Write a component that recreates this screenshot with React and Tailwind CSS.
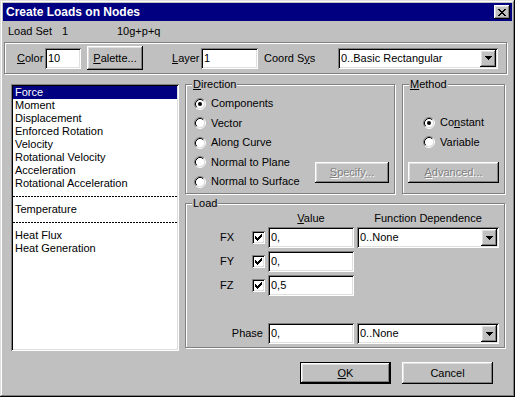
import React from "react";

const sunken =
  "bg-white shadow-[inset_1px_1px_#808080,inset_-1px_-1px_#fff,inset_2px_2px_#000,inset_-2px_-2px_#dfdfdf]";
const raised =
  "bg-[#c0c0c0] shadow-[inset_-1px_-1px_#000,inset_1px_1px_#fff,inset_-2px_-2px_#808080,inset_2px_2px_#dfdfdf]";
const etched = "border border-[#808080] shadow-[1px_1px_0_#fff,inset_1px_1px_0_#fff]";
const disabled = "text-[#808080] [text-shadow:1px_1px_0_#fff]";

const loadTypes = [
  "Force",
  "Moment",
  "Displacement",
  "Enforced Rotation",
  "Velocity",
  "Rotational Velocity",
  "Acceleration",
  "Rotational Acceleration",
  "-",
  "Temperature",
  "-",
  "Heat Flux",
  "Heat Generation",
];

function Radio({ checked }) {
  return (
    <svg width="12" height="12" viewBox="0 0 12 12" className="shrink-0">
      <circle cx="6" cy="6" r="4.5" fill="#fff" />
      <path d="M2.11 9.89A5.5 5.5 0 0 1 9.89 2.11" stroke="#808080" fill="none" />
      <path d="M9.89 2.11A5.5 5.5 0 0 1 2.11 9.89" stroke="#fff" fill="none" />
      <path d="M2.82 9.18A4.5 4.5 0 0 1 9.18 2.82" stroke="#000" fill="none" />
      <path d="M9.18 2.82A4.5 4.5 0 0 1 2.82 9.18" stroke="#dfdfdf" fill="none" />
      {checked && <circle cx="6" cy="6" r="2" fill="#000" />}
    </svg>
  );
}

function Check() {
  return (
    <div className={`w-[13px] h-[13px] shrink-0 flex items-center justify-center ${sunken}`}>
      <svg width="7" height="7" viewBox="0 0 7 7" shapeRendering="crispEdges">
        <path
          fill="#000"
          d="M6 0h1v1h-1zM5 1h2v1h-2zM0 2h1v1h-1zM4 2h3v1h-3zM0 3h2v1h-2zM3 3h3v1h-3zM0 4h5v1h-5zM1 5h3v1h-3zM2 6h1v1h-1z"
        />
      </svg>
    </div>
  );
}

function Field({ value, className = "" }) {
  return <div className={`h-[21px] flex items-center pl-[3px] shrink-0 ${sunken} ${className}`}>{value}</div>;
}

function Combo({ value, className = "" }) {
  return (
    <div className={`h-[21px] flex items-center pl-[3px] pr-[2px] shrink-0 ${sunken} ${className}`}>
      <span className="flex-1">{value}</span>
      <div className={`w-[16px] h-[17px] flex items-center justify-center ${raised}`}>
        <svg width="7" height="4" viewBox="0 0 7 4" shapeRendering="crispEdges">
          <path fill="#000" d="M0 0h7v1h-7zM1 1h5v1h-5zM2 2h3v1h-3zM3 3h1v1h-1z" />
        </svg>
      </div>
    </div>
  );
}

function Group({ label, className = "", children }) {
  return (
    <div className={`relative shrink-0 ${etched} ${className}`}>
      <span className="absolute -top-[7px] left-[6px] bg-[#c0c0c0] px-px leading-[13px]">{label}</span>
      {children}
    </div>
  );
}

function RadioRow({ checked, children }) {
  return (
    <div className="h-[19.5px] flex items-center gap-[5px]">
      <Radio checked={checked} />
      <span>{children}</span>
    </div>
  );
}

function LoadRow({ label, value, combo }) {
  return (
    <div className="flex items-center h-[21px]">
      <div className="w-[66px] pl-[34px] shrink-0">{label}</div>
      <Check />
      <Field value={value} className="ml-[3px] w-[86px]" />
      {combo && <Combo value={combo} className="ml-[3px] w-[142px]" />}
    </div>
  );
}

export default function App() {
  return (
    <div className="w-[515px] h-[397px] overflow-hidden bg-[#c0c0c0] p-[3px] flex flex-col text-[11px] leading-[13px] text-black font-['Liberation_Sans',Arial,sans-serif] select-none shadow-[inset_-1px_-1px_#000,inset_1px_1px_#dfdfdf,inset_-2px_-2px_#808080,inset_2px_2px_#fff]">
      {/* title bar */}
      <div className="h-[18px] shrink-0 bg-[#000080] flex items-center justify-between pl-[3px] pr-[2px]">
        <span className="text-white font-bold text-[12px]">Create Loads on Nodes</span>
        <div className={`w-[16px] h-[14px] flex items-center justify-center ${raised}`}>
          <svg width="8" height="7" viewBox="0 0 8 7" shapeRendering="crispEdges">
            <path
              fill="#000"
              d="M0 0h2v1h-2zM6 0h2v1h-2zM1 1h2v1h-2zM5 1h2v1h-2zM2 2h4v1h-4zM3 3h2v1h-2zM2 4h4v1h-4zM1 5h2v1h-2zM5 5h2v1h-2zM0 6h2v1h-2zM6 6h2v1h-2z"
            />
          </svg>
        </div>
      </div>

      {/* load set */}
      <div className="mt-[4px] h-[13px] flex pl-[5px] shrink-0">
        <span className="w-[54px]">Load Set</span>
        <span className="w-[55px]">1</span>
        <span>10g+p+q</span>
      </div>

      {/* color / layer / coord sys */}
      <div className={`mt-[4px] ml-[1px] w-[503px] h-[32px] shrink-0 flex items-center pl-[12px] ${etched}`}>
        <span className="w-[28px]">
          <u className="underline">C</u>olor
        </span>
        <Field value="10" className="w-[36px]" />
        <div className={`ml-[6px] w-[56px] h-[24px] flex items-center justify-center ${raised}`}>
          <span>
            <u className="underline">P</u>alette...
          </span>
        </div>
        <span className="ml-[29px] w-[29px]">
          <u className="underline">L</u>ayer
        </span>
        <Field value="1" className="w-[57px]" />
        <span className="ml-[6px] w-[74px]">
          Coord S<u className="underline">y</u>s
        </span>
        <Combo value="0..Basic Rectangular" className="w-[160px]" />
      </div>

      {/* main */}
      <div className="mt-[10px] flex shrink-0">
        <div className={`ml-[8px] w-[168px] h-[267px] p-[2px] shrink-0 ${sunken}`}>
          {loadTypes.map((t, i) =>
            t === "-" ? (
              <div key={i} className="h-[13px] flex items-center">
                <div className="h-px w-full bg-[repeating-linear-gradient(90deg,#000_0_2px,transparent_2px_3px)]" />
              </div>
            ) : (
              <div
                key={i}
                className={`h-[13px] pl-[2px] ${i === 0 ? "bg-[#000080] text-white" : ""}`}
              >
                {t}
              </div>
            )
          )}
        </div>

        <div className="ml-[6px] flex flex-col">
          <div className="flex">
            <Group label={<><u className="underline">D</u>irection</>} className="w-[210px] h-[110px] flex">
              <div className="w-[129px] pt-[9px] pl-[8px] shrink-0">
                <RadioRow checked>Components</RadioRow>
                <RadioRow>Vector</RadioRow>
                <RadioRow>Along Curve</RadioRow>
                <RadioRow>Normal to Plane</RadioRow>
                <RadioRow>Normal to Surface</RadioRow>
              </div>
              <div className={`self-end mb-[10px] w-[74px] h-[21px] flex items-center justify-center ${raised} ${disabled}`}>
                <span>
                  <u className="underline">S</u>pecify...
                </span>
              </div>
            </Group>
            <Group label={<><u className="underline">M</u>ethod</>} className="ml-[7px] w-[103px] h-[110px] flex flex-col">
              <div className="pt-[28px] pl-[20px]">
                <RadioRow checked>
                  Co<u className="underline">n</u>stant
                </RadioRow>
                <RadioRow>Variable</RadioRow>
              </div>
              <div className={`mt-auto mb-[10px] ml-[5px] w-[91px] h-[21px] flex items-center justify-center ${raised} ${disabled}`}>
                <span>
                  <u className="underline">A</u>dvanced...
                </span>
              </div>
            </Group>
          </div>

          <Group label="Load" className="mt-[9px] w-[320px] h-[145px] flex flex-col">
            <div className="pt-[8px] h-[21px] flex items-end">
              <span className="w-[82px] shrink-0" />
              <span className="w-[86px] text-center">
                <u className="underline">V</u>alue
              </span>
              <span className="ml-[3px] w-[142px] text-center">Function Dependence</span>
            </div>
            <div className="mt-[2px] flex flex-col gap-[3px]">
              <LoadRow label="FX" value="0," combo="0..None" />
              <LoadRow label="FY" value="0," />
              <LoadRow label="FZ" value="0,5" />
            </div>
            <div className="mt-[27px] flex items-center h-[21px]">
              <span className="w-[82px] pr-[5px] text-right shrink-0">Phase</span>
              <Field value="0," className="w-[86px]" />
              <Combo value="0..None" className="ml-[3px] w-[142px]" />
            </div>
          </Group>
        </div>
      </div>

      {/* buttons */}
      <div className="mt-[11px] flex pl-[297px] shrink-0">
        <div className="w-[91px] h-[22px] border border-black">
          <div className={`w-full h-full flex items-center justify-center ${raised}`}>
            <span>
              <u className="underline">O</u>K
            </span>
          </div>
        </div>
        <div className={`ml-[11px] w-[91px] h-[22px] flex items-center justify-center ${raised}`}>Cancel</div>
      </div>
    </div>
  );
}
